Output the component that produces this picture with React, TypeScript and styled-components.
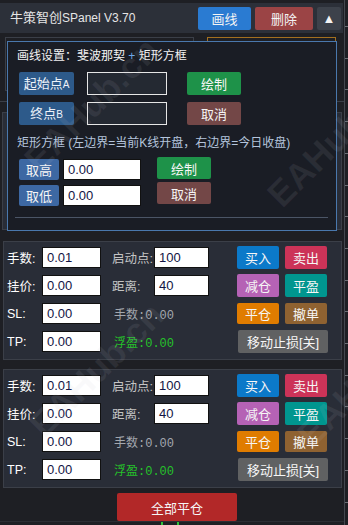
import styled, { createGlobalStyle } from "styled-components";

const GlobalStyle = createGlobalStyle`
  html, body {
    margin: 0;
    padding: 0;
    background: #1e1f24;
  }
  body {
    font-family: "Liberation Sans", "Noto Sans CJK SC", sans-serif;
  }
  * {
    box-sizing: border-box;
  }
`;

const Page = styled.div`
    position: relative;
    display: flex;
    width: 348px;
    height: 525px;
    overflow: hidden;
    background: #1e1f24;
    color: #ffffff;
`;

const Column = styled.div`
    display: flex;
    flex-direction: column;
    width: 344px;
    padding-top: 3px;
`;

const PriceAxis = styled.div`
    width: 4px;
    border-left: 1px solid #44474f;
    background: repeating-linear-gradient(
        to bottom,
        transparent 0px,
        transparent 26px,
        #6b6e75 26px,
        #6b6e75 27px,
        transparent 27px,
        transparent 31.7px
    );
`;

const Header = styled.div`
    display: flex;
    align-items: center;
    width: 343px;
    height: 30px;
    padding: 0 2px 0 10px;
    background: #2c3039;
`;

const Title = styled.div`
    flex: 1;
    font-size: 13px;
    line-height: 18px;
    color: #e6e6e6;

    small {
        font-size: 12px;
    }
`;

const HeaderButton = styled.div<{ $bg: string; $w: number }>`
    display: flex;
    width: ${(p) => p.$w}px;
    height: 23px;
    margin-left: 4px;
    border-radius: 2px;
    justify-content: center;
    align-items: center;

    background: ${(p) => p.$bg};
    color: #f4f4f4;
    font-size: 13px;
`;

const DrawArea = styled.div`
    position: relative;
    height: 199px;
`;

const BoxRow = styled.div`
    display: flex;
    gap: 13px;
    padding: 4px 0 0 5px;
`;

const BehindBox = styled.div<{ $w: number; $line: string }>`
    width: ${(p) => p.$w}px;
    height: 54px;
    border: 1px solid ${(p) => p.$line};
`;

const RuleLine = styled.div`
    height: 1px;
    margin-top: 10px;
    background: #3b3f48;
`;

const HiddenPanel = styled.div`
    height: 118px;
    margin: 10px 2px 0 2px;
    background: #292d37;
    border: 1px solid #3b3f48;
`;

const Popup = styled.div`
    position: absolute;
    top: 8px;
    left: 7px;
    width: 330px;
    height: 190px;
    display: flex;
    flex-direction: column;
    padding: 5px 8px 0 11px;

    background: #1a1d25;
    border: 1px solid #4a78ad;
`;

const PopupTitle = styled.div`
    margin-left: -2px;
    font-size: 12px;
    line-height: 18px;
    color: #f2f2f2;

    span {
        color: #6fa8e8;
    }
`;

const PointRow = styled.div`
    display: flex;
    align-items: center;
    height: 23px;
    margin-top: 7px;
`;

const PointButton = styled.div`
    display: flex;
    width: 55px;
    height: 23px;
    border-radius: 2px;
    justify-content: center;
    align-items: baseline;
    padding-top: 3px;

    background: #2d5a8a;
    color: #eef3fa;
    font-size: 13px;
    line-height: 17px;

    small {
        font-size: 10px;
    }
`;

const DarkField = styled.div`
    width: 80px;
    height: 23px;
    margin-left: 13px;
    background: #242932;
    border: 1px solid #e6e6e6;
`;

const ColorButton = styled.div<{ $bg: string; $w: number; $h: number }>`
    display: flex;
    flex-shrink: 0;
    width: ${(p) => p.$w}px;
    height: ${(p) => p.$h}px;
    border-radius: 2px;
    justify-content: center;
    align-items: center;

    background: ${(p) => p.$bg};
    color: #f6f6f6;
    font-size: 13px;
    white-space: nowrap;
`;

const PushRight = styled.div<{ $gap: number }>`
    margin-left: ${(p) => p.$gap}px;
`;

const RectLabel = styled.div`
    margin-top: 9px;
    margin-left: -2px;
    font-size: 12px;
    line-height: 18px;
    color: #b4c4dc;
    white-space: nowrap;
`;

const RectGrid = styled.div`
    display: flex;
    margin-top: 5px;
`;

const RectColumn = styled.div<{ $gap: number; $top: number }>`
    display: flex;
    flex-direction: column;
    gap: ${(p) => p.$gap}px;
    padding-top: ${(p) => p.$top}px;
`;

const RectRow = styled.div`
    display: flex;
    gap: 4px;
`;

const Field = styled.div<{ $w: number }>`
    flex-shrink: 0;
    width: ${(p) => p.$w}px;
    height: 21px;
    padding-left: 4px;

    background: #ffffff;
    border: 1px solid #111111;
    color: #121444;
    font-size: 13px;
    line-height: 19px;
`;

const Separator = styled.div`
    width: 313px;
    height: 1px;
    margin: 11px 0 0 -4px;
    background: #4b5566;
`;

const TradePanel = styled.div<{ $top: number }>`
    display: flex;
    flex-direction: column;
    gap: 5px;
    height: 119px;
    margin: ${(p) => p.$top}px 2px 0 3px;
    padding: 4px 0 0 3px;

    background: #292d37;
    border: 1px solid #3b3f48;
`;

const TradeRow = styled.div`
    display: flex;
    align-items: center;
    height: 23px;
`;

const Label = styled.div<{ $w: number; $dim?: boolean }>`
    width: ${(p) => p.$w}px;
    flex-shrink: 0;
    font-size: 12.5px;
    white-space: nowrap;
    color: ${(p) => (p.$dim ? "#c4c4c4" : "#ffffff")};
`;

const Stat = styled.div<{ $color: string }>`
    flex-shrink: 0;
    width: 123px;
    margin-left: 13px;
    font-family: "Liberation Mono", "Noto Sans CJK SC", monospace;
    font-size: 12px;
    white-space: nowrap;
    color: ${(p) => p.$color};
`;

const ButtonPair = styled.div`
    display: flex;
    gap: 6px;
`;

const CloseAllRow = styled.div`
    display: flex;
    margin-top: 5px;
    padding-left: 117px;
`;

const BottomStrip = styled.div`
    display: flex;
    height: 4px;
    border-top: 1px solid #2c2e34;
`;

const Candle = styled.div<{ $left: number }>`
    width: 2px;
    margin-left: ${(p) => p.$left}px;
    background: #2fbf3a;
`;

const Watermark = styled.div<{ $x: number; $y: number }>`
    position: absolute;
    left: ${(p) => p.$x}px;
    top: ${(p) => p.$y - 40}px;
    transform: rotate(-45deg);
    transform-origin: left bottom;
    pointer-events: none;

    font-family: "Liberation Sans", sans-serif;
    font-weight: bold;
    font-size: 36px;
    line-height: 40px;
    color: rgba(200, 200, 210, 0.09);
    white-space: nowrap;
`;

type TradeProps = { top: number };

const TradeBlock = ({ top }: TradeProps) => (
    <TradePanel $top={top}>
        <TradeRow>
            <Label $w={35}>手数:</Label>
            <Field $w={59}>0.01</Field>
            <PushRight $gap={11} />
            <Label $w={42} $dim>启动点:</Label>
            <Field $w={55}>100</Field>
            <PushRight $gap={28} />
            <ButtonPair>
                <ColorButton $bg="#0b79c9" $w={42} $h={23}>买入</ColorButton>
                <ColorButton $bg="#cc3358" $w={42} $h={23}>卖出</ColorButton>
            </ButtonPair>
        </TradeRow>
        <TradeRow>
            <Label $w={35}>挂价:</Label>
            <Field $w={59}>0.00</Field>
            <PushRight $gap={11} />
            <Label $w={42} $dim>距离:</Label>
            <Field $w={55}>40</Field>
            <PushRight $gap={28} />
            <ButtonPair>
                <ColorButton $bg="#b562b5" $w={42} $h={23}>减仓</ColorButton>
                <ColorButton $bg="#00968f" $w={42} $h={23}>平盈</ColorButton>
            </ButtonPair>
        </TradeRow>
        <TradeRow>
            <Label $w={35}>SL:</Label>
            <Field $w={59}>0.00</Field>
            <Stat $color="#a3a7ae">手数:0.00</Stat>
            <ButtonPair>
                <ColorButton $bg="#e07c00" $w={42} $h={21}>平仓</ColorButton>
                <ColorButton $bg="#8f6231" $w={42} $h={21}>撤单</ColorButton>
            </ButtonPair>
        </TradeRow>
        <TradeRow>
            <Label $w={35}>TP:</Label>
            <Field $w={59}>0.00</Field>
            <Stat $color="#25c12a">浮盈:0.00</Stat>
            <PushRight $gap={1} />
            <ColorButton $bg="#606162" $w={90} $h={23}>移动止损[关]</ColorButton>
        </TradeRow>
    </TradePanel>
);

export default function App() {
    return (
        <Page>
            <GlobalStyle />
            <Column>
                <Header>
                    <Title>
                        牛策智创<small>SPanel V3.70</small>
                    </Title>
                    <HeaderButton $bg="#2a7bd2" $w={53}>画线</HeaderButton>
                    <HeaderButton $bg="#9b4445" $w={58}>删除</HeaderButton>
                    <HeaderButton $bg="#3d424b" $w={24}>▲</HeaderButton>
                </Header>

                <DrawArea>
                    <BoxRow>
                        <BehindBox $w={189} $line="#3b3f48" />
                        <BehindBox $w={129} $line="#a36f1f" />
                    </BoxRow>
                    <RuleLine />
                    <HiddenPanel />

                    <Popup>
                        <PopupTitle>
                            画线设置：斐波那契 <span>+</span> 矩形方框
                        </PopupTitle>
                        <PointRow>
                            <PointButton>
                                起始点<small>A</small>
                            </PointButton>
                            <DarkField />
                            <PushRight $gap={20} />
                            <ColorButton $bg="#1e9249" $w={54} $h={23}>绘制</ColorButton>
                        </PointRow>
                        <PointRow>
                            <PointButton>
                                终点<small>B</small>
                            </PointButton>
                            <DarkField />
                            <PushRight $gap={20} />
                            <ColorButton $bg="#734747" $w={54} $h={23}>取消</ColorButton>
                        </PointRow>
                        <RectLabel>矩形方框 (左边界=当前K线开盘，右边界=今日收盘)</RectLabel>
                        <RectGrid>
                            <RectColumn $gap={5} $top={2}>
                                <RectRow>
                                    <ColorButton $bg="#3d68a3" $w={40} $h={21}>取高</ColorButton>
                                    <Field $w={78}>0.00</Field>
                                </RectRow>
                                <RectRow>
                                    <ColorButton $bg="#3d68a3" $w={40} $h={21}>取低</ColorButton>
                                    <Field $w={78}>0.00</Field>
                                </RectRow>
                            </RectColumn>
                            <PushRight $gap={16} />
                            <RectColumn $gap={3} $top={0}>
                                <ColorButton $bg="#1e9249" $w={54} $h={22}>绘制</ColorButton>
                                <ColorButton $bg="#734747" $w={54} $h={22}>取消</ColorButton>
                            </RectColumn>
                        </RectGrid>
                        <Separator />
                    </Popup>
                </DrawArea>

                <TradeBlock top={9} />
                <TradeBlock top={9} />

                <CloseAllRow>
                    <ColorButton $bg="#b22828" $w={120} $h={28}>全部平仓</ColorButton>
                </CloseAllRow>
                <BottomStrip>
                    <Candle $left={161} />
                    <Candle $left={14} />
                </BottomStrip>
            </Column>
            <PriceAxis />

            <Watermark $x={45} $y={180}>EAHub.cn</Watermark>
            <Watermark $x={288} $y={215}>EAHub.cn</Watermark>
            <Watermark $x={50} $y={445}>EAHub.cn</Watermark>
            <Watermark $x={318} $y={455}>EAHub.cn</Watermark>
        </Page>
    );
}
